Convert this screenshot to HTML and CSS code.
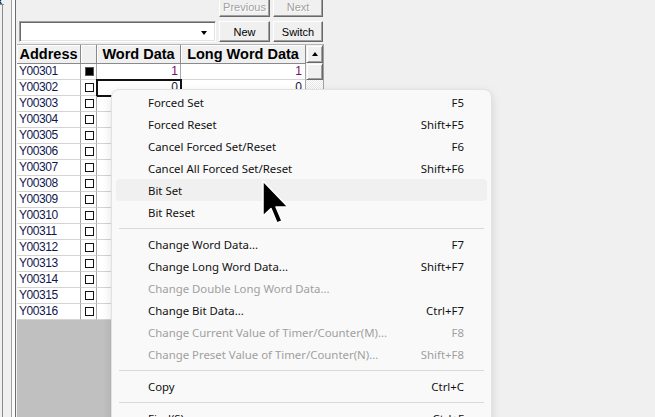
FILE: index.html
```html
<!DOCTYPE html>
<html>
	<head>
		<meta charset="UTF-8">
		<link rel="stylesheet" href="styles.css">
	</head>
	<body>
		<div class="window">
			<div class="gutter"><span class="closer">x</span></div>
			<div class="panel">
				<div class="toolbar toolbar-top">
					<button class="btn btn-wide" disabled>Previous</button>
					<button class="btn" disabled>Next</button>
				</div>
				<div class="toolbar">
					<div class="combo"><span class="combo-arrow"></span></div>
					<button class="btn btn-wide">New</button>
					<button class="btn">Switch</button>
				</div>
				<div class="grid">
					<div class="sheet">
						<div class="row head">
							<div class="cell">Address</div>
							<div class="cell"></div>
							<div class="cell">Word Data</div>
							<div class="cell">Long Word Data</div>
						</div>
						<div class="row">
							<div class="cell addr">Y00301</div>
							<div class="cell chk"><span class="box on"></span></div>
							<div class="cell num on">1</div>
							<div class="cell num on">1</div>
						</div>
						<div class="row">
							<div class="cell addr">Y00302</div>
							<div class="cell chk"><span class="box"></span></div>
							<div class="cell num selected">0</div>
							<div class="cell num">0</div>
						</div>
						<div class="row"><div class="cell addr">Y00303</div><div class="cell chk"><span class="box"></span></div><div class="cell num">0</div><div class="cell num">0</div></div>
						<div class="row"><div class="cell addr">Y00304</div><div class="cell chk"><span class="box"></span></div><div class="cell num">0</div><div class="cell num">0</div></div>
						<div class="row"><div class="cell addr">Y00305</div><div class="cell chk"><span class="box"></span></div><div class="cell num">0</div><div class="cell num">0</div></div>
						<div class="row"><div class="cell addr">Y00306</div><div class="cell chk"><span class="box"></span></div><div class="cell num">0</div><div class="cell num">0</div></div>
						<div class="row"><div class="cell addr">Y00307</div><div class="cell chk"><span class="box"></span></div><div class="cell num">0</div><div class="cell num">0</div></div>
						<div class="row"><div class="cell addr">Y00308</div><div class="cell chk"><span class="box"></span></div><div class="cell num">0</div><div class="cell num">0</div></div>
						<div class="row"><div class="cell addr">Y00309</div><div class="cell chk"><span class="box"></span></div><div class="cell num">0</div><div class="cell num">0</div></div>
						<div class="row"><div class="cell addr">Y00310</div><div class="cell chk"><span class="box"></span></div><div class="cell num">0</div><div class="cell num">0</div></div>
						<div class="row"><div class="cell addr">Y00311</div><div class="cell chk"><span class="box"></span></div><div class="cell num">0</div><div class="cell num">0</div></div>
						<div class="row"><div class="cell addr">Y00312</div><div class="cell chk"><span class="box"></span></div><div class="cell num">0</div><div class="cell num">0</div></div>
						<div class="row"><div class="cell addr">Y00313</div><div class="cell chk"><span class="box"></span></div><div class="cell num">0</div><div class="cell num">0</div></div>
						<div class="row"><div class="cell addr">Y00314</div><div class="cell chk"><span class="box"></span></div><div class="cell num">0</div><div class="cell num">0</div></div>
						<div class="row"><div class="cell addr">Y00315</div><div class="cell chk"><span class="box"></span></div><div class="cell num">0</div><div class="cell num">0</div></div>
						<div class="row"><div class="cell addr">Y00316</div><div class="cell chk"><span class="box"></span></div><div class="cell num">0</div><div class="cell num">0</div></div>
					</div>
					<div class="vscroll">
						<div class="sb-btn"><span class="sb-up"></span></div>
						<div class="sb-btn sb-thumb"></div>
						<div class="sb-track"></div>
					</div>
				</div>
			</div>
		</div>

		<!-- context menu -->
		<div class="menu">
			<div class="item"><span>Forced Set</span><span>F5</span></div>
			<div class="item"><span>Forced Reset</span><span>Shift+F5</span></div>
			<div class="item"><span>Cancel Forced Set/Reset</span><span>F6</span></div>
			<div class="item"><span>Cancel All Forced Set/Reset</span><span>Shift+F6</span></div>
			<div class="item hover"><span>Bit Set</span><span></span></div>
			<div class="item"><span>Bit Reset</span><span></span></div>
			<div class="sep"></div>
			<div class="item"><span>Change Word Data...</span><span>F7</span></div>
			<div class="item"><span>Change Long Word Data...</span><span>Shift+F7</span></div>
			<div class="item disabled"><span>Change Double Long Word Data...</span><span></span></div>
			<div class="item"><span>Change Bit Data...</span><span>Ctrl+F7</span></div>
			<div class="item disabled"><span>Change Current Value of Timer/Counter(M)...</span><span>F8</span></div>
			<div class="item disabled"><span>Change Preset Value of Timer/Counter(N)...</span><span>Shift+F8</span></div>
			<div class="sep"></div>
			<div class="item"><span>Copy</span><span>Ctrl+C</span></div>
			<div class="sep"></div>
			<div class="item"><span>Find(S)</span><span>Ctrl+F</span></div>
		</div>

		<svg class="cursor" width="30" height="46" viewBox="0 0 30 46">
			<polygon points="1,1 1,36 9,28.5 15,43 20,41 14,27 26,27" fill="#000" stroke="#fff" stroke-width="1.5" stroke-linejoin="round"/>
		</svg>
	</body>
</html>
```

FILE: styles.css
```css
* {
	box-sizing: border-box;
}

html, body {
	margin: 0;
	height: 100%;
	overflow: hidden;
}

body {
	background: #f0f0f0;
	font-family: "Liberation Sans", Arial, sans-serif;
	color: #000;
}

.window {
	display: flex;
	height: 100%;
}

/* left rails */
.gutter {
	width: 17px;
	flex: none;
	background: linear-gradient(to right,
		#f0f0f0 0 2px, #8c8c8c 2px 3px, #f0f0f0 3px 11px,
		#a0a0a0 11px 12px, #fbfbfb 12px 15px, #6d6d6d 15px 16px, #f0f0f0 16px 17px);
}
.closer {
	display: block;
	width: 4px;
	height: 5px;
	overflow: hidden;
	background: #f0f0f0;
	border-bottom: 1px solid #8c8c8c;
	font: bold 9px "Liberation Sans", sans-serif;
	line-height: 2px;
	text-indent: -3px;
}

.panel {
	width: 307px;
	flex: none;
	display: flex;
	flex-direction: column;
}

.toolbar {
	display: flex;
	gap: 3px;
	height: 21px;
	padding: 0 1px 0 2px;
	margin-top: 4px;
}
.toolbar-top {
	justify-content: flex-end;
	height: 20px;
	margin-top: -3px;
}

.btn {
	width: 50px;
	height: 100%;
	padding: 0;
	background: #f0f0f0;
	border: 1px solid;
	border-color: #fff #696969 #696969 #fff;
	box-shadow: inset -1px -1px #a0a0a0;
	font: 11px "Liberation Sans", Arial, sans-serif;
	color: #000;
}
.btn-wide {
	width: 51px;
}
.btn:disabled {
	color: #a0a0a0;
	text-shadow: 1px 1px #fff;
}

.combo {
	width: 197px;
	background: #fff;
	border: 1px solid;
	border-color: #a0a0a0 #fff #fff #a0a0a0;
	box-shadow: inset 1px 1px #696969, inset -1px -1px #e3e3e3;
	display: flex;
	align-items: center;
	justify-content: flex-end;
	padding-right: 8px;
}
.combo-arrow {
	width: 0;
	height: 0;
	border-left: 3.5px solid transparent;
	border-right: 3.5px solid transparent;
	border-top: 4px solid #000;
	margin-top: 2px;
}

/* data grid */
.grid {
	flex: 1;
	display: flex;
	margin-top: 2px;
	border-top: 1px solid #b4b4b4;
	border-right: 1px solid #a0a0a0;
}
.sheet {
	width: 289px;
	background: #c0c0c0;
}
.row {
	display: grid;
	grid-template-columns: 64px 16px 84px 125px;
	height: 16px;
	background: #fff;
}
.cell {
	border-right: 1px solid #a8a8a8;
	border-bottom: 1px solid #d4d4d4;
	font-size: 12px;
	line-height: 15px;
	white-space: nowrap;
	overflow: hidden;
}
.row.head {
	height: 19px;
	background: #f0f0f0;
}
.row.head .cell {
	border-right-color: #8a8a8a;
	border-bottom-color: #8a8a8a;
	box-shadow: inset 1px 1px #fff;
	font-size: 14.5px;
	font-weight: bold;
	line-height: 18px;
	text-align: center;
}
.addr {
	padding-left: 2px;
	color: #101650;
	letter-spacing: -0.45px;
}
.chk {
	padding: 3px 0 0 4px;
}
.box {
	display: block;
	width: 9px;
	height: 9px;
	border: 1px solid #111;
	background: #fff;
}
.box.on {
	background: #000;
	border-color: #555;
}
.num {
	text-align: right;
	padding-right: 2px;
	color: #1a1a40;
}
.num:last-child {
	padding-right: 3px;
}
.num.on {
	color: #7a0a6e;
}
.selected {
	outline: 2px solid #111;
	outline-offset: -1px;
}

.vscroll {
	width: 17px;
	display: flex;
	flex-direction: column;
}
.sb-btn {
	height: 18px;
	background: #f0f0f0;
	border: 1px solid;
	border-color: #f0f0f0 #696969 #696969 #f0f0f0;
	box-shadow: inset 1px 1px #fff, inset -1px -1px #a0a0a0;
	display: flex;
	align-items: center;
	justify-content: center;
}
.sb-thumb {
	height: 17px;
}
.sb-up {
	width: 0;
	height: 0;
	border-left: 3.5px solid transparent;
	border-right: 3.5px solid transparent;
	border-bottom: 4px solid #000;
}
.sb-track {
	flex: 1;
	background: repeating-conic-gradient(#fff 0 25%, #e6e6e6 0 50%) 0 0 / 2px 2px;
}

/* context menu */
.menu {
	position: absolute;
	left: 111px;
	top: 89px;
	width: 381px;
	padding: 1px 4px;
	background: #f9f9f9;
	border: 1px solid #e2e2e2;
	border-radius: 8px;
	box-shadow: 0 3px 10px rgba(0, 0, 0, 0.12);
	font-family: "Noto Sans", sans-serif;
	font-size: 11.4px;
	color: #111;
}
.item {
	display: flex;
	justify-content: space-between;
	align-items: center;
	height: 22px;
	padding: 0 23px 0 32px;
	border-radius: 4px;
	white-space: nowrap;
}
.item.hover {
	background: #f0f0f0;
}
.item.disabled {
	color: #a0a0a0;
}
.sep {
	height: 1px;
	margin: 5px 3px 4px;
	background: #d9d9d9;
}

.cursor {
	position: absolute;
	left: 262px;
	top: 180px;
}
```
